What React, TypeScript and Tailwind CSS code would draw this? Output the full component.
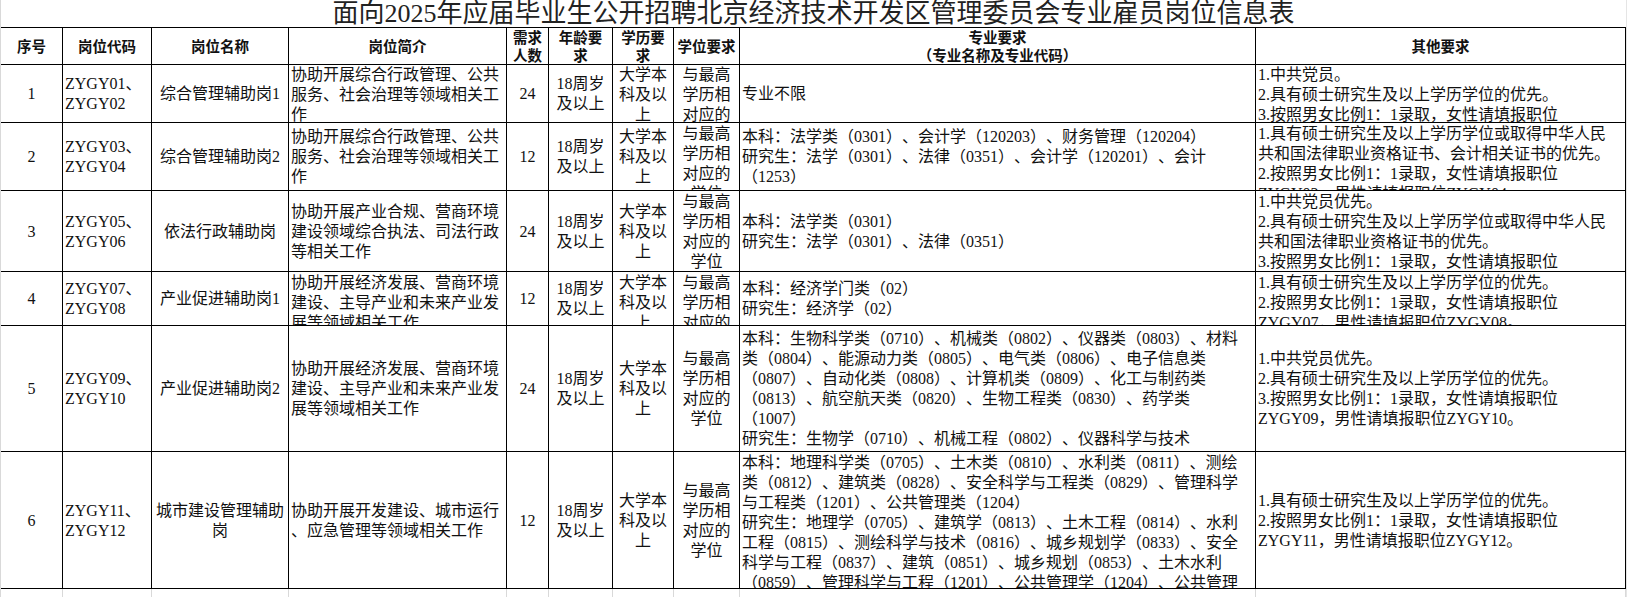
import clsx from "clsx"

type Row = {
  no: string
  code: string[]
  name: string[]
  intro: string[]
  count: string
  major: string[]
  other: string[]
  h: string
}

const cols =
  "grid grid-cols-[62px_89px_137px_218px_42px_64px_61px_66px_516px_370px]"

const age = ["18周岁", "及以上"]
const edu = ["大学本", "科及以", "上"]
const degree = ["与最高", "学历相", "对应的", "学位"]

const rows: Row[] = [
  {
    no: "1",
    code: ["ZYGY01、", "ZYGY02"],
    name: ["综合管理辅助岗1"],
    intro: ["协助开展综合行政管理、公共", "服务、社会治理等领域相关工", "作"],
    count: "24",
    major: ["专业不限"],
    other: [
      "1.中共党员。",
      "2.具有硕士研究生及以上学历学位的优先。",
      "3.按照男女比例1：1录取，女性请填报职位",
      "ZYGY01，男性请填报职位ZYGY02。",
    ],
    h: "h-[59px]",
  },
  {
    no: "2",
    code: ["ZYGY03、", "ZYGY04"],
    name: ["综合管理辅助岗2"],
    intro: ["协助开展综合行政管理、公共", "服务、社会治理等领域相关工", "作"],
    count: "12",
    major: [
      "本科：法学类（0301）、会计学（120203）、财务管理（120204）",
      "研究生：法学（0301）、法律（0351）、会计学（120201）、会计",
      "（1253）",
    ],
    other: [
      "1.具有硕士研究生及以上学历学位或取得中华人民",
      "共和国法律职业资格证书、会计相关证书的优先。",
      "2.按照男女比例1：1录取，女性请填报职位",
      "ZYGY03，男性请填报职位ZYGY04。",
    ],
    h: "h-[68px]",
  },
  {
    no: "3",
    code: ["ZYGY05、", "ZYGY06"],
    name: ["依法行政辅助岗"],
    intro: ["协助开展产业合规、营商环境", "建设领域综合执法、司法行政", "等相关工作"],
    count: "24",
    major: ["本科：法学类（0301）", "研究生：法学（0301）、法律（0351）"],
    other: [
      "1.中共党员优先。",
      "2.具有硕士研究生及以上学历学位或取得中华人民",
      "共和国法律职业资格证书的优先。",
      "3.按照男女比例1：1录取，女性请填报职位",
      "ZYGY05，男性请填报职位ZYGY06。",
    ],
    h: "h-[81px]",
  },
  {
    no: "4",
    code: ["ZYGY07、", "ZYGY08"],
    name: ["产业促进辅助岗1"],
    intro: ["协助开展经济发展、营商环境", "建设、主导产业和未来产业发", "展等领域相关工作"],
    count: "12",
    major: ["本科：经济学门类（02）", "研究生：经济学（02）"],
    other: [
      "1.具有硕士研究生及以上学历学位的优先。",
      "2.按照男女比例1：1录取，女性请填报职位",
      "ZYGY07，男性请填报职位ZYGY08。",
    ],
    h: "h-[54px]",
  },
  {
    no: "5",
    code: ["ZYGY09、", "ZYGY10"],
    name: ["产业促进辅助岗2"],
    intro: ["协助开展经济发展、营商环境", "建设、主导产业和未来产业发", "展等领域相关工作"],
    count: "24",
    major: [
      "本科：生物科学类（0710）、机械类（0802）、仪器类（0803）、材料",
      "类（0804）、能源动力类（0805）、电气类（0806）、电子信息类",
      "（0807）、自动化类（0808）、计算机类（0809）、化工与制药类",
      "（0813）、航空航天类（0820）、生物工程类（0830）、药学类",
      "（1007）",
      "研究生：生物学（0710）、机械工程（0802）、仪器科学与技术",
    ],
    other: [
      "1.中共党员优先。",
      "2.具有硕士研究生及以上学历学位的优先。",
      "3.按照男女比例1：1录取，女性请填报职位",
      "ZYGY09，男性请填报职位ZYGY10。",
    ],
    h: "h-[126px]",
  },
  {
    no: "6",
    code: ["ZYGY11、", "ZYGY12"],
    name: ["城市建设管理辅助", "岗"],
    intro: ["协助开展开发建设、城市运行", "、应急管理等领域相关工作"],
    count: "12",
    major: [
      "本科：地理科学类（0705）、土木类（0810）、水利类（0811）、测绘",
      "类（0812）、建筑类（0828）、安全科学与工程类（0829）、管理科学",
      "与工程类（1201）、公共管理类（1204）",
      "研究生：地理学（0705）、建筑学（0813）、土木工程（0814）、水利",
      "工程（0815）、测绘科学与技术（0816）、城乡规划学（0833）、安全",
      "科学与工程（0837）、建筑（0851）、城乡规划（0853）、土木水利",
      "（0859）、管理科学与工程（1201）、公共管理学（1204）、公共管理",
    ],
    other: [
      "1.具有硕士研究生及以上学历学位的优先。",
      "2.按照男女比例1：1录取，女性请填报职位",
      "ZYGY11，男性请填报职位ZYGY12。",
    ],
    h: "h-[137px]",
  },
]

function Cell({ lines, left }: { lines: string[]; left?: boolean }) {
  return (
    <div
      className={clsx(
        "flex flex-col overflow-hidden border-r border-b border-black px-[2px] pt-[1px] leading-[20px] [justify-content:safe_center]",
        left ? "items-start text-left" : "items-center text-center"
      )}
    >
      {lines.map((l, i) => (
        <div key={i} className="whitespace-nowrap">
          {l}
        </div>
      ))}
    </div>
  )
}

function Head({ lines }: { lines: string[] }) {
  return (
    <div className="flex flex-col items-center justify-center border-r border-b border-black text-center leading-[18px]">
      {lines.map((l, i) => (
        <div key={i} className="whitespace-nowrap">
          {l}
        </div>
      ))}
    </div>
  )
}

export default function App() {
  return (
    <div className="flex h-[597px] w-[1632px] overflow-hidden bg-white text-[#111] font-[family-name:Liberation_Serif,Noto_Sans_CJK_SC,serif] [text-spacing-trim:space-all]">
      <div className="flex w-[1626px] flex-col border-l border-[#d9d9d9]">
        <div className="flex h-[31px] items-center justify-center text-[26px] leading-none text-[#222]">
          面向2025年应届毕业生公开招聘北京经济技术开发区管理委员会专业雇员岗位信息表
        </div>
        <div className="border-t border-black">
          <div
            className={clsx(
              cols,
              "h-[36px] text-[14.5px] font-bold font-[family-name:Noto_Sans_CJK_SC,sans-serif]"
            )}
          >
            <Head lines={["序号"]} />
            <Head lines={["岗位代码"]} />
            <Head lines={["岗位名称"]} />
            <Head lines={["岗位简介"]} />
            <Head lines={["需求", "人数"]} />
            <Head lines={["年龄要", "求"]} />
            <Head lines={["学历要", "求"]} />
            <Head lines={["学位要求"]} />
            <Head lines={["专业要求", "（专业名称及专业代码）"]} />
            <Head lines={["其他要求"]} />
          </div>
          {rows.map((r) => (
            <div key={r.no} className={clsx(cols, r.h, "text-[16px]")}>
              <Cell lines={[r.no]} />
              <Cell lines={r.code} left />
              <Cell lines={r.name} />
              <Cell lines={r.intro} left />
              <Cell lines={[r.count]} />
              <Cell lines={age} />
              <Cell lines={edu} />
              <Cell lines={degree} />
              <Cell lines={r.major} left />
              <Cell lines={r.other} left />
            </div>
          ))}
          <div className={clsx(cols, "h-[8px]")}>
            {Array.from({ length: 10 }).map((_, i) => (
              <div key={i} className="border-r border-[#d9d9d9]" />
            ))}
          </div>
        </div>
      </div>
      <div className="flex-1 border-l border-[#e5e5e5]" />
    </div>
  )
}
